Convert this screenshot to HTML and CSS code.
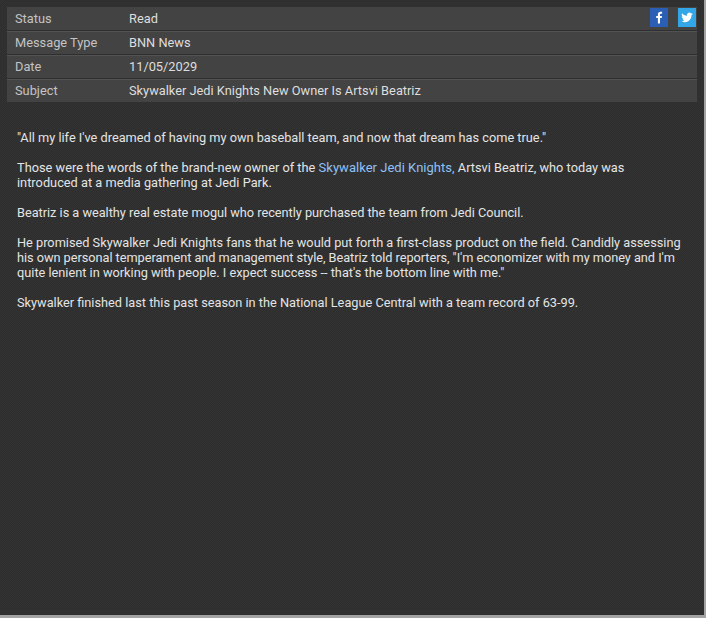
FILE: index.html
```html
<!DOCTYPE html>
<html lang="en">
<head>
<meta charset="utf-8">
<title>Message</title>
<link rel="stylesheet" href="styles.css">
</head>
<body>
<main class="panel">
  <div class="meta">
    <div class="row">
      <span class="label">Status</span><span class="value">Read</span>
      <div class="social">
        <span class="share fb"><svg viewBox="0 0 18 19" width="18" height="19"><path fill="#fff" d="M10 15.500V10h1.700l.3-2.100h-2V6.700c0-.6.2-1 1-1h1.100V3.800c-.2 0-.9-.1-1.600-.1-1.600 0-2.600 1-2.600 2.700v1.500H6.200V10h1.700v5.500z"/></svg></span>
        <span class="share tw"><svg viewBox="-1 -1.500 20 21" width="18" height="19"><path fill="#fff" d="M15.500 5c-.5.2-1 .4-1.500.4.500-.3.900-.8 1.100-1.400-.5.300-1.100.5-1.700.6a2.600 2.600 0 0 0-4.500 2.400C6.700 6.900 4.800 5.900 3.500 4.300c-.7 1.200-.3 2.700.8 3.500-.4 0-.8-.1-1.200-.3 0 1.300.9 2.400 2.100 2.600-.4.100-.8.100-1.200 0 .3 1.100 1.300 1.800 2.400 1.800A5.300 5.300 0 0 1 2.500 13a7.500 7.500 0 0 0 11.500-6.700c.6-.3 1.100-.8 1.500-1.300z"/></svg></span>
      </div>
    </div>
    <div class="row"><span class="label">Message Type</span><span class="value">BNN News</span></div>
    <div class="row"><span class="label">Date</span><span class="value">11/05/2029</span></div>
    <div class="row"><span class="label">Subject</span><span class="value">Skywalker Jedi Knights New Owner Is Artsvi Beatriz</span></div>
  </div>
  <article class="body">
    <p>"All my life I've dreamed of having my own baseball team, and now that dream has come true."</p>
    <p class="loose">Those were the words of the brand-new owner of the <a class="link" href="#">Skywalker Jedi Knights,</a> Artsvi Beatriz, who today was introduced at a media gathering at Jedi Park.</p>
    <p class="snug">Beatriz is a wealthy real estate mogul who recently purchased the team from Jedi Council.</p>
    <p>He promised Skywalker Jedi Knights fans that he would put forth a first-class product on the field. Candidly assessing <span class="tight">his own personal temperament and management style, Beatriz told reporters, "I'm economizer with my money and I'm</span> quite lenient in working with people. I expect success -- that's the bottom line with me."</p>
    <p>Skywalker finished last this past season in the National League Central with a team record of 63-99.</p>
  </article>
</main>
</body>
</html>
```
FILE: styles.css
```css
* { box-sizing: border-box; }
html, body { margin: 0; height: 100%; }
body {
  background: #a2a2a2;
  padding: 0 2px 3px 0;
  font-family: Roboto, sans-serif;
  font-size: 12.8px;
  color: #dedede;
  overflow: hidden;
}
.panel {
  height: 615px;
  padding: 7px 7px 0;
  background-color: #303030;
  background-image: repeating-conic-gradient(#2e2e2e 0 25%, #323232 0 50%);
  background-size: 2px 2px;
}
.meta { display: flex; flex-direction: column; background: #434343; }
.row {
  display: flex;
  align-items: center;
  height: 24px;
  padding: 0 1px 0 8px;
  border-bottom: 1px solid #2f2f2f;
  box-shadow: inset 0 1px 0 #525252;
}
.row:first-child { box-shadow: none; }
.row:last-child { border-bottom: 0; height: 23px; }
.label { width: 114px; color: #c4c4c4; }
.value { color: #dedede; }
.social { display: flex; gap: 10px; margin-left: auto; align-self: flex-start; margin-top: 1px; }
.share { display: block; width: 18px; height: 19px; }
.share svg { display: block; }
.fb { background: #2b5fb5; }
.tw { background: #33a6e8; }
.body { padding: 28px 10px 0; font-size: 12.75px; line-height: 15px; color: #e4e4e4; }
.body p { margin: 0 0 15px; }
.loose { letter-spacing: 0.02px; }
.snug { letter-spacing: -0.02px; }
.tight { letter-spacing: -0.04px; }
.link { font-size: 13px; color: #8fc1f5; text-decoration: none; }
```
